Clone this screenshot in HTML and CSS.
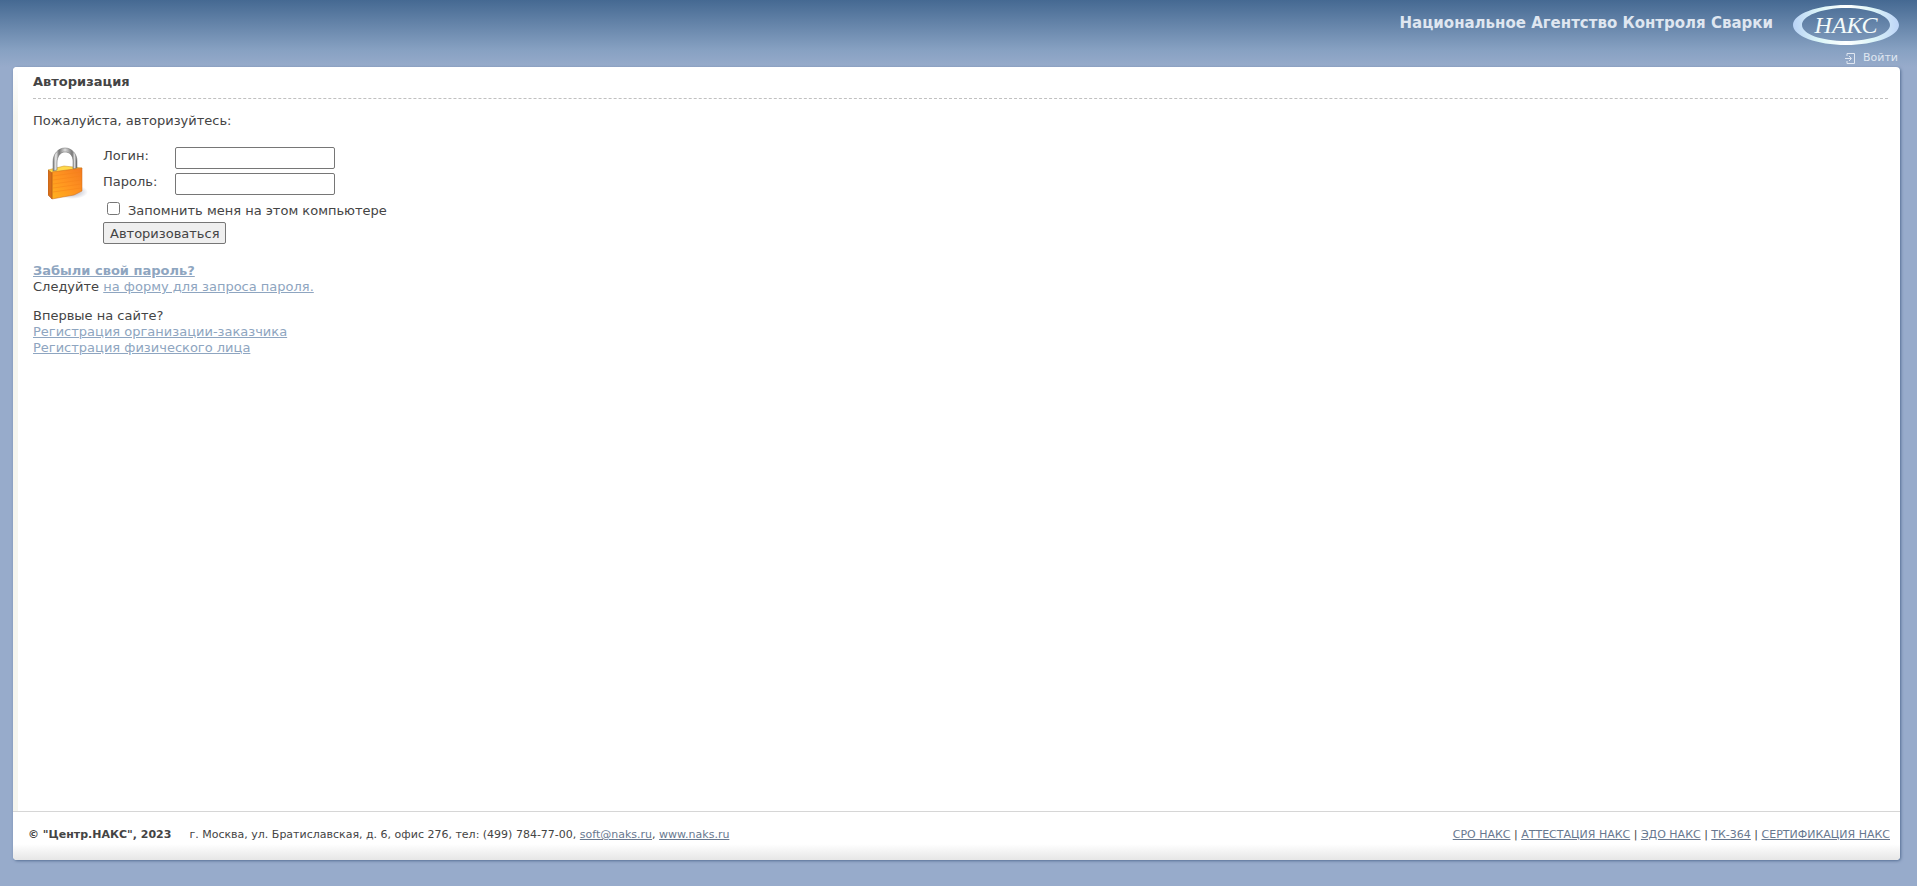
FILE: index.html
```
<!DOCTYPE html>
<html lang="ru">

<head>
    <meta charset="utf-8">
    <meta name="viewport" content="width=device-width, initial-scale=1.0">
    <title>Авторизация</title>
    <link rel="stylesheet" href="styles.css">
</head>

<body>
    <header class="header">
        <div class="brand">
            <span class="brand-name">Национальное Агентство Контроля Сварки</span>
            <a href="#" class="logo">
                <svg width="106" height="40" viewBox="0 0 106 40">
                    <defs>
                        <linearGradient id="ring" x1="0" y1="0" x2="1" y2="0">
                            <stop offset="0" stop-color="#b9d3f6" />
                            <stop offset="0.25" stop-color="#dcf6f8" />
                            <stop offset="0.5" stop-color="#ffffff" />
                            <stop offset="0.75" stop-color="#def6f8" />
                            <stop offset="1" stop-color="#bdd4f8" />
                        </linearGradient>
                    </defs>
                    <path fill="url(#ring)" fill-rule="evenodd" d="M53 0C82 0 106 9 106 20S82 40 53 40 0 31 0 20 24 0 53 0ZM53 3C28 3 9 11 9 20S28 36 53 36 97 29 97 20 78 3 53 3Z" />
                    <text class="logo-text" x="53" y="28" text-anchor="middle">НАКС</text>
                </svg>
            </a>
        </div>
        <a href="#" class="login-link">
            <svg width="10" height="11" viewBox="0 0 10 11">
                <path d="M2 3V.5H9.500V10.500H2V8M0 5.500H6M4 3L6.500 5.500 4 8" fill="none" stroke="currentColor" />
            </svg>
            <span>Войти</span>
        </a>
    </header>

    <div class="panel">
        <main class="content">
            <h1>Авторизация</h1>
            <p class="note">Пожалуйста, авторизуйтесь:</p>

            <form class="auth">
                <svg class="lock" width="43" height="55" viewBox="1 -1 43 55">
                    <defs>
                        <linearGradient id="metal" x1="0" y1="0" x2="1" y2="0">
                            <stop offset="0" stop-color="#777" />
                            <stop offset="0.12" stop-color="#eee" />
                            <stop offset="0.25" stop-color="#777" />
                            <stop offset="0.5" stop-color="#ddd" />
                            <stop offset="0.8" stop-color="#777" />
                            <stop offset="0.9" stop-color="#ddd" />
                            <stop offset="1" stop-color="#555" />
                        </linearGradient>
                        <linearGradient id="brass" x1="0" y1="1" x2="1" y2="0">
                            <stop offset="0" stop-color="#ffb21f" />
                            <stop offset="0.5" stop-color="#ff9420" />
                            <stop offset="1" stop-color="#f47a20" />
                        </linearGradient>
                        <radialGradient id="shade">
                            <stop offset="0" stop-color="#a8a8b8" />
                            <stop offset="1" stop-color="#fff" />
                        </radialGradient>
                    </defs>
                    <ellipse cx="25" cy="44" rx="16" ry="7" fill="url(#shade)" />
                    <path d="M1 22L17 18 35 20 33 23 5 25Z" fill="#ffd84a" stroke="#c88a18" stroke-width="0.500" />
                    <path d="M6 23V14C6 6 11 0 18 0S30 6 30 13V20L26 21V13C26 8 23 4 18 4S10 9 10 15V22Z" fill="url(#metal)" stroke="#666" stroke-width="0.500" />
                    <path d="M5 24L35 20V43L27 47 5 51Z" fill="url(#brass)" stroke="#c8691a" stroke-width="0.500" />
                    <path d="M1 22L5 25V51L1 47Z" fill="#d9701a" stroke="#a65316" stroke-width="0.500" />
                    <path d="M6 28L34 24M6 32L34 28M6 36L34 32M6 40L34 36M6 44L34 40" stroke="#f58218" stroke-width="0.500" />
                </svg>
                <div class="fields">
                    <label for="login">Логин:</label>
                    <input type="text" id="login" class="field">
                    <label for="password">Пароль:</label>
                    <input type="password" id="password" class="field">
                    <div class="remember">
                        <input type="checkbox" id="remember">
                        <label for="remember">Запомнить меня на этом компьютере</label>
                    </div>
                    <button type="submit">Авторизоваться</button>
                </div>
            </form>

            <p class="links">
                <a href="#"><b>Забыли свой пароль?</b></a><br>
                Следуйте <a href="#">на форму для запроса пароля.</a>
            </p>
            <p class="links">
                Впервые на сайте?<br>
                <a href="#">Регистрация организации-заказчика</a><br>
                <a href="#">Регистрация физического лица</a>
            </p>
        </main>

        <footer class="footer">
            <div class="contacts">
                <b>© "Центр.НАКС", 2023</b>
                <span>г. Москва, ул. Братиславская, д. 6, офис 276, тел: (499) 784-77-00, <a href="#">soft@naks.ru</a>, <a href="#">www.naks.ru</a></span>
            </div>
            <div>
                <a href="#">СРО НАКС</a> | <a href="#">АТТЕСТАЦИЯ НАКС</a> | <a href="#">ЭДО НАКС</a> | <a href="#">ТК-364</a> | <a href="#">СЕРТИФИКАЦИЯ НАКС</a>
            </div>
        </footer>
    </div>
</body>

</html>
```
FILE: styles.css
```
* {
    margin: 0;
    padding: 0;
    box-sizing: border-box;
}

body {
    display: flex;
    flex-direction: column;
    min-height: 100vh;
    padding: 0 17px 26px 13px;
    background: #97abcb linear-gradient(#456992, #87a1c2 50px, #97abcb 67px) no-repeat;
    font-family: Verdana, "DejaVu Sans", sans-serif;
    font-size: 13px;
    line-height: 16px;
    color: #444;
}

/* header */
.header {
    display: flex;
    flex-direction: column;
    align-items: flex-end;
    height: 67px;
    padding-top: 5px;
}

.brand {
    display: flex;
    gap: 20px;
    padding-right: 1px;
}

.brand-name {
    padding-top: 10px;
    font-size: 15px;
    font-weight: bold;
    color: #dfe6f0;
}

.logo svg {
    display: block;
}

.logo-text {
    font-family: "Liberation Serif", serif;
    font-size: 24px;
    font-style: italic;
    fill: #f4fbfa;
}

.login-link {
    display: flex;
    align-items: center;
    gap: 8px;
    margin-top: 5px;
    padding-right: 2px;
    font-size: 11px;
    color: #dfe6f0;
    text-decoration: none;
}

/* white panel */
.panel {
    display: flex;
    flex-direction: column;
    flex: 1;
    border-radius: 4px;
    background: #fff;
    box-shadow: 1px 1px 3px #566f94;
}

.content {
    flex: 1;
    padding: 7px 12px 20px 20px;
    border-radius: 4px 0 0 0;
    background: linear-gradient(#fff, #f5f5ee 50px) no-repeat left / 5px 100%;
}

h1 {
    padding-bottom: 8px;
    border-bottom: 1px dashed #c0c0c0;
    font-size: 13px;
}

.note {
    margin: 14px 0 18px;
}

a {
    color: #8ea5c0;
}

/* login form */
.auth {
    display: flex;
    gap: 12px;
    padding-left: 15px;
    margin-bottom: 19px;
}

.fields {
    display: grid;
    grid-template-columns: 72px 160px;
    grid-template-rows: 22px 22px 19px 22px;
    row-gap: 4px;
}

.fields label {
    padding-top: 1px;
}

.field {
    border: 1px solid #767676;
    border-radius: 2px;
    padding: 1px 2px;
    font: inherit;
}

.remember {
    display: flex;
    grid-column: 1 / 3;
    gap: 8px;
    padding: 3px 0 0 4px;
    white-space: nowrap;
}

.remember input {
    width: 13px;
    height: 13px;
}

button {
    grid-column: 1 / 3;
    justify-self: start;
    padding: 1px 6px 0;
    border: 1px solid #767676;
    border-radius: 2px;
    background: #efefef;
    font: inherit;
    color: #444;
}

.links {
    margin-bottom: 13px;
}

/* footer */
.footer {
    display: flex;
    justify-content: space-between;
    padding: 15px 10px 17px 15px;
    border-top: 1px solid #d6d6d6;
    border-radius: 0 0 4px 4px;
    background: linear-gradient(#fff, #e6e6e6) no-repeat bottom / 100% 16px;
    font-size: 11px;
}

.footer a {
    color: #68788f;
}

.contacts {
    display: flex;
    gap: 18px;
}
```
